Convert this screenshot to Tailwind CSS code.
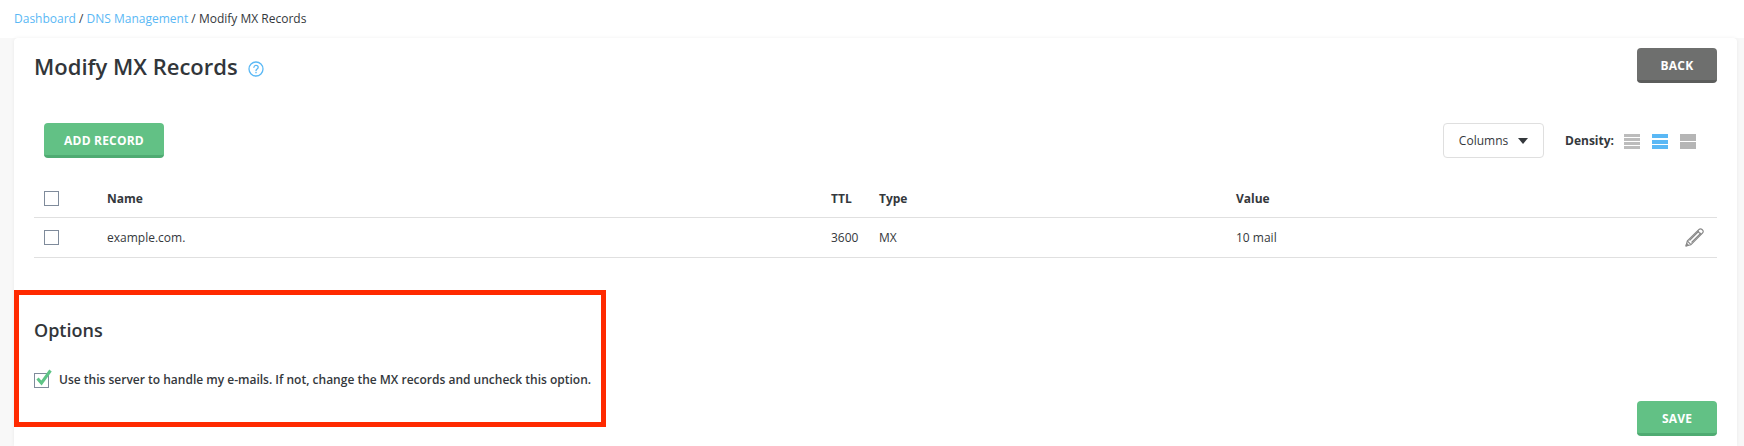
<!doctype html>
<html>

    <head>
        <meta charset="utf-8">
        <script src="https://cdn.jsdelivr.net/npm/@tailwindcss/browser@4"></script>
    </head>

    <body class="h-[446px] overflow-hidden bg-white font-['Open_Sans',sans-serif] text-xs text-[#34383c]">
        <nav class="h-[38px] pl-[14px] pt-[10px] leading-[18px]">
            <a class="text-[#5ab8f5]">Dashboard</a> / <a class="text-[#5ab8f5]">DNS Management</a> / Modify MX Records
        </nav>

        <div class="bg-[#f8f8f8] h-[408px] pl-[14px] pr-[7px]">
            <div class="bg-white h-full rounded-t shadow-[0_0_4px_rgba(0,0,0,0.06)]">
                <div class="flex justify-between pl-5 pr-5 pt-[9px] h-[85px]">
                    <div class="flex items-center h-10">
                        <h1 class="text-[22px] font-semibold text-[#32363a]">Modify MX Records</h1>
                        <svg class="ml-[10px] mt-[3px]" width="16" height="16" viewBox="0 0 16 16" fill="none" stroke="#5ab8f5" stroke-width="1.3">
                            <circle cx="8" cy="8" r="7"/>
                            <path d="M5.900 6.300C6 5 7 4.400 8 4.400c1.300 0 2.200.8 2.200 1.900 0 1.700-2.200 1.700-2.200 3.400" stroke-linecap="round"/>
                            <path d="M8 11v1.300"/>
                        </svg>
                    </div>
                    <button class="mt-px w-20 h-[35px] pt-[3px] rounded bg-[#6e6f6e] border-b-[3px] border-[#5c5d5c] text-white font-bold tracking-[0.2px]">BACK</button>
                </div>

                <div class="flex items-center justify-between pl-[30px] h-[35px]">
                    <button class="w-[120px] h-[35px] pt-[3px] rounded bg-[#62c185] border-b-[3px] border-[#4fab72] text-white font-bold tracking-[0.2px]">ADD RECORD</button>
                    <div class="flex items-center">
                        <div class="w-[101px] h-[35px] flex items-center justify-center gap-[10px] border border-[#dfdfdf] rounded bg-white">
                            Columns
                            <span class="w-0 h-0 border-x-[5px] border-x-transparent border-t-[6px] border-t-[#34383c]"></span>
                        </div>
                        <span class="ml-[21px] font-bold">Density:</span>
                        <div class="ml-[10px] mt-[2px] w-4 h-[15px] flex flex-col justify-between">
                            <i class="h-[2.500px] bg-[#bcbcbc]"></i><i class="h-[2.500px] bg-[#bcbcbc]"></i><i class="h-[2.500px] bg-[#bcbcbc]"></i><i class="h-[2.500px] bg-[#bcbcbc]"></i>
                        </div>
                        <div class="ml-3 mt-[2px] w-4 h-[15px] flex flex-col justify-between">
                            <i class="h-[4px] bg-[#5ab8f5]"></i><i class="h-[4px] bg-[#5ab8f5]"></i><i class="h-[4px] bg-[#5ab8f5]"></i>
                        </div>
                        <div class="ml-3 mt-[2px] mr-[41px] w-4 h-[15px] flex flex-col justify-between">
                            <i class="h-[7px] bg-[#b5b5b5]"></i><i class="h-[7px] bg-[#b5b5b5]"></i>
                        </div>
                    </div>
                </div>

                <div class="ml-5 mr-5 mt-[23px]">
                    <div class="flex items-center h-[37px] border-b border-[#e0e0e0] font-bold">
                        <span class="ml-[10px] w-[15px] h-[15px] border border-[#7f8b9b] -mt-[1px]"></span>
                        <span class="ml-[48px] w-[724px]">Name</span>
                        <span class="w-[48px]">TTL</span>
                        <span class="w-[357px]">Type</span>
                        <span>Value</span>
                    </div>
                    <div class="flex items-center h-10 border-b border-[#e0e0e0]">
                        <span class="ml-[10px] w-[15px] h-[15px] border border-[#7f8b9b]"></span>
                        <span class="ml-[48px] w-[724px]">example.com.</span>
                        <span class="w-[48px]">3600</span>
                        <span class="w-[357px]">MX</span>
                        <span class="flex-1">10 mail</span>
                        <svg class="mr-[13px]" width="19" height="19" viewBox="0 0 19 19" fill="none" stroke="#8a8a8a" stroke-width="1.100" stroke-linejoin="round">
                            <path d="M1 18l1.300-5L14 1.500c.8-.8 2.200-.8 3 0l.5.5c.8.8.8 2.200 0 3L6 16.700z"/>
                            <path d="M2.300 13l3.700 3.700M12.500 3l3.500 3.500M4.500 12.500l9.500-9.500M6.500 14.500l9.500-9.500"/>
                            <path d="M1 18l2.500-.7-1.800-1.800z" fill="#8a8a8a"/>
                        </svg>
                    </div>
                </div>

                <div class="flex justify-between items-end mt-[32px]">
                    <section class="w-[592px] h-[137px] border-[5px] border-[#ff2a00] pl-[15px] pt-[23px]">
                        <h2 class="text-lg font-semibold leading-6 text-[#32363a]">Options</h2>
                        <label class="flex items-center mt-[30px] font-semibold">
                            <span class="relative w-[15px] h-[15px] border border-[#7f8b9b]">
                                <svg class="absolute -top-[5px] left-0" width="18" height="17" viewBox="0 0 18 17" fill="none" stroke="#5ec486" stroke-width="3">
                                    <path d="M2.500 9.500l4 4.500 9-12.500"/>
                                </svg>
                            </span>
                            <span class="ml-[10px]">Use this server to handle my e-mails. If not, change the MX records and uncheck this option.</span>
                        </label>
                    </section>
                    <button class="mr-5 mb-[-9px] w-20 h-[35px] pt-[3px] rounded bg-[#62c185] border-b-[3px] border-[#4fab72] text-white font-bold tracking-[0.2px]">SAVE</button>
                </div>
            </div>
        </div>
    </body>

</html>
